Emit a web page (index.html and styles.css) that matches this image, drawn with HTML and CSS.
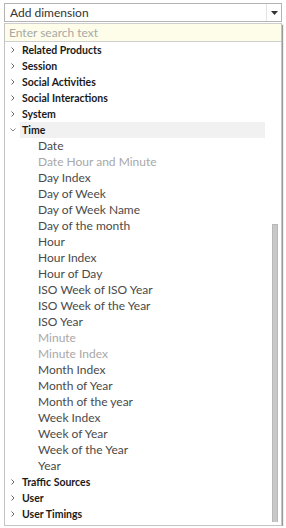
FILE: index.html
```html
<!DOCTYPE html>
<html lang="en">
<head>
    <meta charset="UTF-8">
    <title>Add dimension</title>
    <link rel="stylesheet" href="styles.css">
</head>
<body>
    <div class="picker">
        <div class="select">
            <span class="select-label">Add dimension</span>
            <span class="select-arrow">
                <svg width="7" height="4" viewBox="0 0 7 4"><path d="M0 0h7L3.5 4z" fill="#333"/></svg>
            </span>
        </div>
        <div class="dropdown">
            <div class="search">Enter search text</div>
            <div class="list">
                <div class="items">
                    <div class="group"><span class="chev"><svg width="4" height="6" viewBox="0 0 4 6"><path d="M0.5 0.5L3 3L0.5 5.5" fill="none" stroke="#666" stroke-width="1"/></svg></span><span class="group-label">Related Products</span></div>
                    <div class="group"><span class="chev"><svg width="4" height="6" viewBox="0 0 4 6"><path d="M0.5 0.5L3 3L0.5 5.5" fill="none" stroke="#666" stroke-width="1"/></svg></span><span class="group-label">Session</span></div>
                    <div class="group"><span class="chev"><svg width="4" height="6" viewBox="0 0 4 6"><path d="M0.5 0.5L3 3L0.5 5.5" fill="none" stroke="#666" stroke-width="1"/></svg></span><span class="group-label">Social Activities</span></div>
                    <div class="group"><span class="chev"><svg width="4" height="6" viewBox="0 0 4 6"><path d="M0.5 0.5L3 3L0.5 5.5" fill="none" stroke="#666" stroke-width="1"/></svg></span><span class="group-label">Social Interactions</span></div>
                    <div class="group"><span class="chev"><svg width="4" height="6" viewBox="0 0 4 6"><path d="M0.5 0.5L3 3L0.5 5.5" fill="none" stroke="#666" stroke-width="1"/></svg></span><span class="group-label">System</span></div>
                    <div class="group open"><span class="chev"><svg width="6" height="4" viewBox="0 0 6 4"><path d="M0.5 0.5L3 3L5.5 0.5" fill="none" stroke="#888" stroke-width="1"/></svg></span><span class="group-label">Time</span></div>
                    <div class="item">Date</div>
                    <div class="item muted">Date Hour and Minute</div>
                    <div class="item">Day Index</div>
                    <div class="item">Day of Week</div>
                    <div class="item">Day of Week Name</div>
                    <div class="item">Day of the month</div>
                    <div class="item">Hour</div>
                    <div class="item">Hour Index</div>
                    <div class="item">Hour of Day</div>
                    <div class="item">ISO Week of ISO Year</div>
                    <div class="item">ISO Week of the Year</div>
                    <div class="item">ISO Year</div>
                    <div class="item muted">Minute</div>
                    <div class="item muted">Minute Index</div>
                    <div class="item">Month Index</div>
                    <div class="item">Month of Year</div>
                    <div class="item">Month of the year</div>
                    <div class="item">Week Index</div>
                    <div class="item">Week of Year</div>
                    <div class="item">Week of the Year</div>
                    <div class="item">Year</div>
                    <div class="group"><span class="chev"><svg width="4" height="6" viewBox="0 0 4 6"><path d="M0.5 0.5L3 3L0.5 5.5" fill="none" stroke="#666" stroke-width="1"/></svg></span><span class="group-label">Traffic Sources</span></div>
                    <div class="group"><span class="chev"><svg width="4" height="6" viewBox="0 0 4 6"><path d="M0.5 0.5L3 3L0.5 5.5" fill="none" stroke="#666" stroke-width="1"/></svg></span><span class="group-label">User</span></div>
                    <div class="group"><span class="chev"><svg width="4" height="6" viewBox="0 0 4 6"><path d="M0.5 0.5L3 3L0.5 5.5" fill="none" stroke="#666" stroke-width="1"/></svg></span><span class="group-label">User Timings</span></div>
                </div>
                <div class="track"><div class="thumb"></div></div>
            </div>
        </div>
    </div>
</body>
</html>
```
FILE: styles.css
```css
:root {
    --border: #b4b4b4;
    --text: #333333;
    --muted: #a8a8a8;
}
html, body {
    margin: 0;
    padding: 0;
    background: #ffffff;
}
body {
    font-family: Lato, "Open Sans", sans-serif;
    color: var(--text);
    padding: 3px 4px 0 4px;
}
.picker {
    width: 278px;
}
.select {
    display: flex;
    align-items: center;
    height: 17px;
    border: 1px solid var(--border);
}
.select-label {
    flex: 1;
    padding-left: 5px;
    font-size: 12px;
    color: #333;
}
.select-arrow {
    width: 14px;
    height: 17px;
    border-left: 1px solid #e4e4e4;
    display: flex;
    align-items: center;
    justify-content: center;
}
.dropdown {
    margin-top: 1px;
    border: 1px solid #c4c4c4;
    border-top: none;
    box-shadow: 1px 2px 1px #9a9a9a;
}
.search {
    height: 17px;
    line-height: 17px;
    padding-left: 4px;
    background: #fdfde9;
    border: 1px solid #cfcfcf;
    border-left: none;
    border-right: none;
    font-size: 12px;
    color: var(--muted);
}
.list {
    display: flex;
    padding-bottom: 3px;
}
.items {
    flex: 1;
}
.group, .item {
    height: 16px;
    line-height: 16px;
    white-space: nowrap;
}
.group {
    display: flex;
    align-items: center;
    font-size: 10.5px;
    font-weight: 700;
    color: #1a1a1a;
    margin-right: 6px;
}
.chev {
    width: 15px;
    padding-left: 6px;
    box-sizing: border-box;
    display: flex;
    align-items: center;
}
.group.open .chev {
    padding-left: 5px;
}
.group-label {
    flex: 1;
    padding-left: 2px;
    height: 16px;
}
.group.open .group-label {
    background: #f1f1f1;
}
.item {
    padding-left: 33px;
    font-size: 12px;
    color: #4a4a4a;
}
.item.muted {
    color: var(--muted);
}
.track {
    width: 10px;
    display: flex;
    flex-direction: column;
}
.thumb {
    margin-top: 182px;
    margin-left: 1px;
    width: 4px;
    flex: 1;
    background: #c8c8c8;
    border: 1px solid #b8b8b8;
    border-bottom: none;
}
```
